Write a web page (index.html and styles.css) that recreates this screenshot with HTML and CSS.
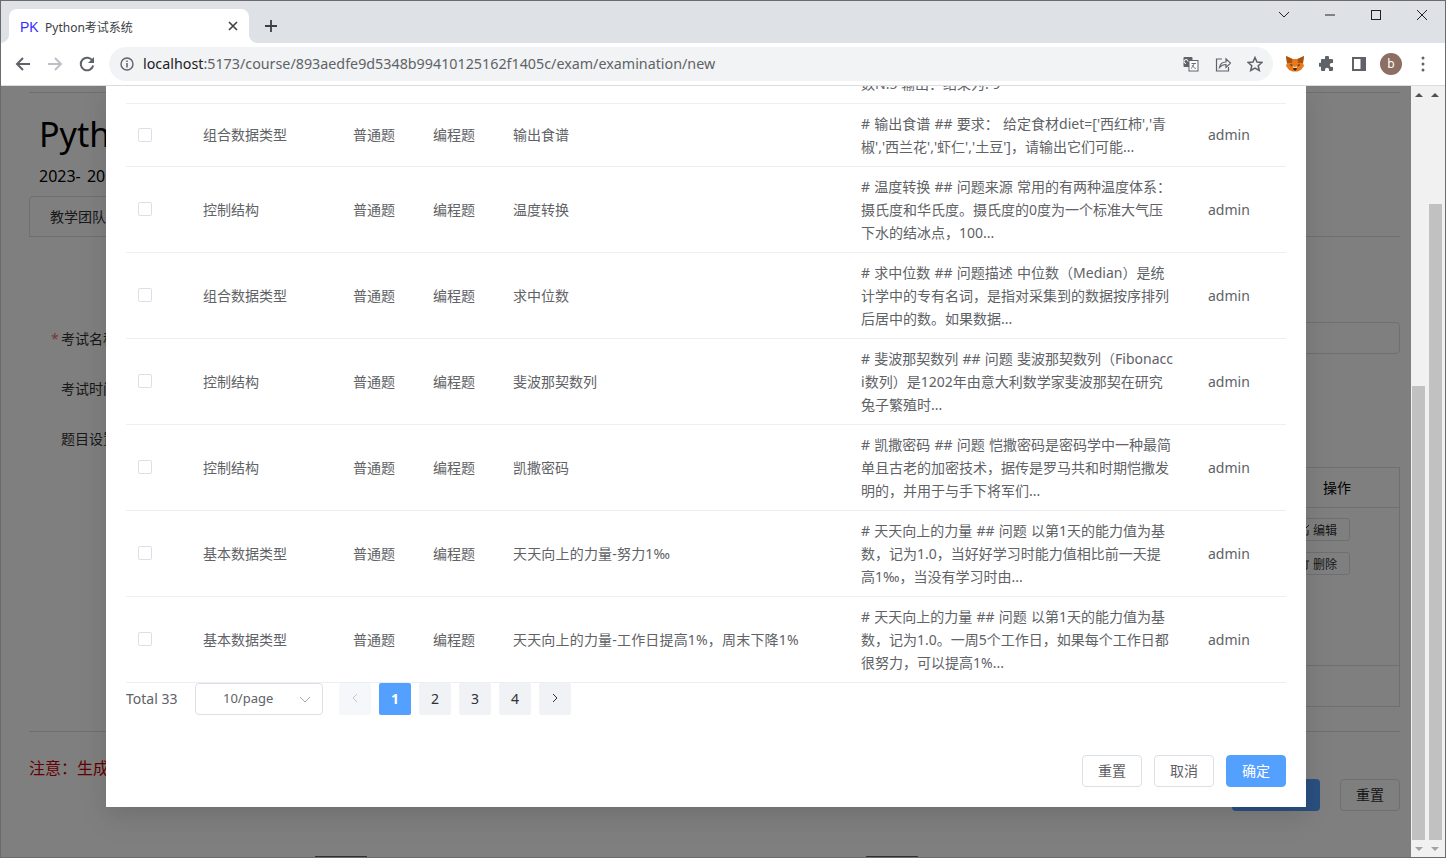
FILE: index.html
```html
<!DOCTYPE html>
<html lang="zh-CN">
<head>
<meta charset="utf-8">
<title>Python考试系统</title>
<link rel="stylesheet" href="styles.css">
</head>
<body>
<div class="window">
  <header class="tabstrip">
    <div class="tab">
      <span class="fav">PK</span>
      <span class="tab-title">Python考试系统</span>
      <svg class="ic-close" width="10" height="10" viewBox="0 0 10 10"><path d="M1 1l8 8M9 1l-8 8" stroke="#3c4043" stroke-width="1.6" fill="none"/></svg>
    </div>
    <svg class="newtab" width="14" height="14" viewBox="0 0 14 14"><path d="M7 1v12M1 7h12" stroke="#3c4043" stroke-width="1.8" fill="none"/></svg>
    <div class="winctl">
      <svg class="wc" width="16" height="16" viewBox="0 0 16 16"><path d="M3 5l5 5 5-5" stroke="#222" stroke-width="1" fill="none"/></svg>
      <svg class="wc" width="16" height="16" viewBox="0 0 16 16"><path d="M3 8h10" stroke="#222" stroke-width="1" fill="none"/></svg>
      <svg class="wc" width="16" height="16" viewBox="0 0 16 16"><rect x="3.500" y="3.500" width="9" height="9" stroke="#222" stroke-width="1" fill="none"/></svg>
      <svg class="wc" width="16" height="16" viewBox="0 0 16 16"><path d="M3 3l10 10M13 3L3 13" stroke="#222" stroke-width="1" fill="none"/></svg>
    </div>
  </header>
  <nav class="toolbar">
    <div class="navs">
      <svg width="18" height="18" viewBox="0 0 18 18"><path d="M16 9H3M9 3L3 9l6 6" stroke="#5f6368" stroke-width="2" fill="none"/></svg>
      <svg width="18" height="18" viewBox="0 0 18 18"><path d="M2 9h13M9 3l6 6-6 6" stroke="#bdc1c6" stroke-width="2" fill="none"/></svg>
      <svg width="18" height="18" viewBox="0 0 18 18"><path d="M14.600 6A6.300 6.300 0 1 0 15.200 10.500" stroke="#5f6368" stroke-width="2" fill="none"/><path d="M16 2v6h-6z" fill="#5f6368"/></svg>
    </div>
    <div class="omnibox">
      <svg class="info" width="14" height="14" viewBox="0 0 14 14"><circle cx="7" cy="7" r="6" stroke="#5f6368" stroke-width="1.400" fill="none"/><path d="M7 6v4.500M7 3.500v1.400" stroke="#5f6368" stroke-width="1.500" fill="none"/></svg>
      <span class="url"><span class="host">localhost</span>:5173/course/893aedfe9d5348b99410125162f1405c/exam/examination/new</span>
      <div class="omni-icons">
        <svg width="16" height="16" viewBox="0 0 16 16"><rect x="0.500" y="1" width="9" height="10" rx="1" fill="#5f6368"/><rect x="6" y="4.500" width="9" height="10.500" fill="#fff" stroke="#5f6368"/><path d="M3 7.500a2 2 0 1 1 2-2" stroke="#fff" fill="none"/><path d="M8.500 7.500h4.500M11 7.500c-.3 2.500-1.500 4-3 5M9 9c.6 1.500 2 3 4 3.500" stroke="#5f6368" stroke-width=".9" fill="none"/></svg>
        <svg width="16" height="16" viewBox="0 0 16 16"><path d="M7 3H1.500v12h12v-4" stroke="#5f6368" stroke-width="1.200" fill="none"/><path d="M4.500 11.500c.5-3.500 3-5.500 6.500-5.500V2.800l4.500 4.300-4.500 4.300V8.500c-2.500 0-4.800.8-6.500 3z" stroke="#5f6368" stroke-width="1.200" fill="none"/></svg>
        <svg width="16" height="16" viewBox="0 0 16 16"><path d="M8 1.500l2 4.500 4.900.5-3.700 3.200 1.100 4.800L8 12l-4.300 2.500 1.100-4.800L1.100 6.500 6 6z" stroke="#5f6368" stroke-width="1.500" fill="none"/></svg>
      </div>
    </div>
    <div class="exts">
      <svg width="18" height="16" viewBox="0 0 18 16"><path d="M0 0l6.500 3h5L18 0l-1 7 1 3-3 4-3.500 1.500h-5L3 14l-3-4 1-3z" fill="#e8791c"/><path d="M0 0l6.500 3L6 7 1 7zM18 0l-6.500 3 .5 4 5 0z" fill="#a8540f"/><path d="M7 12h4l-1 2.500H8z" fill="#3a2a1c"/><path d="M4 8l3 1-2 1.500zM14 8l-3 1 2 1.500z" fill="#5a3c1c"/><path d="M7 10l2 1 2-1v2H7z" fill="#f0c8a0"/></svg>
      <svg width="16" height="16" viewBox="0 0 16 16"><path d="M6 1.500a2 2 0 0 1 4 0V3h3a1 1 0 0 1 1 1v3h-1.300a2 2 0 0 0 0 4H14v3a1 1 0 0 1-1 1h-3v-1.300a2 2 0 0 0-4 0V15H3a1 1 0 0 1-1-1v-3.200H.8a2 2 0 0 1 0-4H2V4a1 1 0 0 1 1-1h3z" fill="#5f6368"/></svg>
      <svg class="ext-side" width="14" height="14" viewBox="0 0 14 14"><path d="M0 0h14v14H0z" fill="#5f6368"/><path d="M2 2h6.500v10H2z" fill="#fff"/></svg>
      <span class="avatar">b</span>
      <svg width="4" height="16" viewBox="0 0 4 16"><circle cx="2" cy="2" r="1.500" fill="#5f6368"/><circle cx="2" cy="8" r="1.500" fill="#5f6368"/><circle cx="2" cy="14" r="1.500" fill="#5f6368"/></svg>
    </div>
  </nav>
  <main class="content">
    <div class="viewport">
      <div class="page">
        <div class="top-rule"></div>
        <h1 class="course-title">Python</h1>
        <p class="course-term">2023- 2024</p>
        <div class="tabs"><span class="tabs-item">教学团队</span></div>
        <form class="form">
          <div class="form-row"><span class="form-label"><i class="star">*</i>考试名称</span><span class="form-input"></span></div>
          <div class="form-row"><span class="form-label">考试时间</span></div>
          <div class="form-row"><span class="form-label">题目设置</span></div>
        </form>
        <div class="bg-table">
          <div class="bg-head"><span class="bg-op">操作</span></div>
          <div class="bg-body">
            <span class="bg-btn"><svg class="bg-ic" width="12" height="12" viewBox="0 0 12 12"><path d="M1 2h6M1 2v9h9V6M5 7l6-6" stroke="#303133" fill="none"/></svg>编辑</span>
            <span class="bg-btn"><svg class="bg-ic" width="12" height="12" viewBox="0 0 12 12"><path d="M1 3h10M3 3v8h6V3M5 1h2" stroke="#303133" fill="none"/></svg>删除</span>
          </div>
          <div class="bg-foot"></div>
        </div>
        <div class="bottom-rule"></div>
        <div class="note-row">
          <span class="note">注意：生成</span>
          <div class="actions">
            <span class="bg-primary"></span>
            <span class="bg-reset">重置</span>
          </div>
        </div>
        <div class="peeks"><span class="peek"></span><span class="peek"></span></div>
      </div>
      <div class="mask"></div>
      <section class="modal">
        <table class="qtable">
          <colgroup><col class="c1"><col class="c2"><col class="c3"><col class="c4"><col class="c5"><col class="c6"><col class="c7"></colgroup>
          <tbody>
            <tr class="clip-row"><td colspan="5"></td><td colspan="2"><div class="clip-inner">数N:5 输出：结果为: 9</div></td></tr>
            <tr class="tight"><td><span class="cb"></span></td><td>组合数据类型</td><td>普通题</td><td>编程题</td><td>输出食谱</td><td># 输出食谱 ## 要求： 给定食材diet=['西红柿','青<br>椒','西兰花','虾仁','土豆']，请输出它们可能...</td><td>admin</td></tr>
            <tr><td><span class="cb"></span></td><td>控制结构</td><td>普通题</td><td>编程题</td><td>温度转换</td><td># 温度转换 ## 问题来源 常用的有两种温度体系：<br>摄氏度和华氏度。摄氏度的0度为一个标准大气压<br>下水的结冰点，100...</td><td>admin</td></tr>
            <tr><td><span class="cb"></span></td><td>组合数据类型</td><td>普通题</td><td>编程题</td><td>求中位数</td><td># 求中位数 ## 问题描述 中位数（Median）是统<br>计学中的专有名词，是指对采集到的数据按序排列<br>后居中的数。如果数据...</td><td>admin</td></tr>
            <tr><td><span class="cb"></span></td><td>控制结构</td><td>普通题</td><td>编程题</td><td>斐波那契数列</td><td># 斐波那契数列 ## 问题 斐波那契数列（Fibonacc<br>i数列）是1202年由意大利数学家斐波那契在研究<br>兔子繁殖时...</td><td>admin</td></tr>
            <tr><td><span class="cb"></span></td><td>控制结构</td><td>普通题</td><td>编程题</td><td>凯撒密码</td><td># 凯撒密码 ## 问题 恺撒密码是密码学中一种最简<br>单且古老的加密技术，据传是罗马共和时期恺撒发<br>明的，并用于与手下将军们...</td><td>admin</td></tr>
            <tr><td><span class="cb"></span></td><td>基本数据类型</td><td>普通题</td><td>编程题</td><td class="loose">天天向上的力量-努力1‰</td><td># 天天向上的力量 ## 问题 以第1天的能力值为基<br>数，记为1.0，当好好学习时能力值相比前一天提<br>高1‰，当没有学习时由...</td><td>admin</td></tr>
            <tr><td><span class="cb"></span></td><td>基本数据类型</td><td>普通题</td><td>编程题</td><td class="loose">天天向上的力量-工作日提高1%，周末下降1%</td><td># 天天向上的力量 ## 问题 以第1天的能力值为基<br>数，记为1.0。一周5个工作日，如果每个工作日都<br>很努力，可以提高1%...</td><td>admin</td></tr>
          </tbody>
        </table>
        <div class="pager">
          <span class="total">Total 33</span>
          <span class="select"><span class="sel-text">10/page</span><svg class="sel-arrow" width="12" height="12" viewBox="0 0 12 12"><path d="M1 4l5 5 5-5" stroke="#a8abb2" fill="none"/></svg></span>
          <span class="pg pg-disabled"><svg width="10" height="10" viewBox="0 0 10 10"><path d="M7 1L3 5l4 4" stroke="#c0c4cc" fill="none"/></svg></span>
          <span class="pg pg-active">1</span>
          <span class="pg">2</span>
          <span class="pg">3</span>
          <span class="pg">4</span>
          <span class="pg"><svg width="10" height="10" viewBox="0 0 10 10"><path d="M3 1l4 4-4 4" stroke="#303133" fill="none"/></svg></span>
        </div>
        <footer class="modal-foot">
          <span class="btn">重置</span>
          <span class="btn">取消</span>
          <span class="btn btn-primary">确定</span>
        </footer>
      </section>
    </div>
    <div class="sbar"><i class="sb-up"></i><div class="sb-track sb-track-a"><div class="sb-thumb"></div></div><i class="sb-down"></i></div>
    <div class="sbar"><i class="sb-up"></i><div class="sb-track sb-track-b"><div class="sb-thumb"></div></div><i class="sb-down"></i></div>
  </main>
</div>
</body>
</html>
```

FILE: styles.css
```css
* { box-sizing: border-box; }
html, body { margin: 0; height: 100%; overflow: hidden; }
body { font-family: "Noto Sans", "Noto Sans CJK SC", sans-serif; font-size: 14px; color: #606266; }

.window { width: 1446px; height: 858px; display: flex; flex-direction: column; border: 1px solid #6b6b6b; background: #fff; }

/* browser frame */
.tabstrip { flex: 0 0 42px; background: #dee1e6; display: flex; align-items: flex-end; padding-left: 8px; }
.tab { width: 240px; height: 34px; background: #fff; border-radius: 8px 8px 0 0; display: flex; align-items: center; padding: 0 11px; position: relative; }
.tab::before, .tab::after { content: ""; position: absolute; bottom: 0; width: 8px; height: 8px; }
.tab::before { left: -8px; background: radial-gradient(circle at 0 0, #dee1e6 7.500px, #fff 8px); }
.tab::after { right: -8px; background: radial-gradient(circle at 100% 0, #dee1e6 7.500px, #fff 8px); }
.fav { font-size: 14px; color: #3b2bff; width: 25px; font-family: "Liberation Sans", sans-serif; padding-top: 1px; }
.tab-title { flex: 1; font-size: 12px; color: #3c4043; padding-top: 2px; }
.newtab { align-self: flex-start; margin: 18px 0 0 15px; }
.winctl { margin-left: auto; align-self: flex-start; display: flex; gap: 30px; margin-top: 6px; padding-right: 15px; }
.toolbar { flex: 0 0 43px; background: #fff; border-bottom: 1px solid #dadce0; display: flex; align-items: center; padding: 0 13px 1px 13px; }
.navs { display: flex; gap: 14px; width: 95px; flex: none; }
.omnibox { flex: none; width: 1164px; height: 34px; border-radius: 17px; background: #f1f3f4; display: flex; align-items: center; padding: 0 10px 0 11px; }
.info { margin-right: 9px; }
.url { font-size: 14.300px; color: #5f6368; white-space: nowrap; padding-bottom: 1px; }
.host { color: #202124; }
.omni-icons { margin-left: auto; display: flex; gap: 16px; align-items: center; }
.exts { display: flex; align-items: center; margin-left: 13px; gap: 15px; flex: none; }
.ext-side { margin: 0 -1px 0 2px; }
.avatar { width: 22px; height: 22px; border-radius: 50%; background: #8d6e63; color: #fff; font-size: 12px; display: flex; align-items: center; justify-content: center; margin-right: 4px; }

/* main */
.content { flex: 1; min-height: 0; display: flex; }
.viewport { width: 1411px; position: relative; overflow: hidden; }
.sbar { width: 17px; background: #f1f1f1; display: flex; flex-direction: column; padding-left: 1px; }
.sb-up, .sb-down { flex: 0 0 17px; display: flex; align-items: center; justify-content: center; }
.sb-up::before { content: ""; border: 4px solid transparent; border-top: 0; border-bottom: 4px solid #505050; margin-right: 3px; }
.sb-down::before { content: ""; border: 4px solid transparent; border-bottom: 0; border-top: 4px solid #a3a3a3; margin-right: 3px; }
.sb-track { flex: 1; display: flex; flex-direction: column; padding-right: 3px; }
.sb-track-a { padding-top: 283px; }
.sb-track-b { padding-top: 101px; }
.sb-thumb { flex: 1; background: #c1c1c1; }

/* dimmed page */
.page { height: 100%; padding: 6px 11px 0 28px; color: #000; overflow: hidden; position: relative; }
.top-rule { border-top: 1px solid #dcdfe6; }
.course-title { margin: 18px 0 0; padding-left: 10px; font-size: 34px; font-weight: 400; line-height: 46px; }
.course-term { margin: 7px 0 0; padding-left: 10px; font-size: 16px; line-height: 24px; word-spacing: 2px; }
.tabs { margin-top: 8px; height: 41px; border-bottom: 1px solid #dcdfe6; }
.tabs-item { display: block; width: 160px; height: 41px; border: 1px solid #dcdfe6; border-radius: 4px 4px 0 0; padding-left: 20px; line-height: 40px; color: #303133; }
.form { margin-top: 85px; display: flex; flex-direction: column; gap: 18px; }
.form-row { display: flex; height: 32px; align-items: center; padding-left: 22px; }
.form-label { color: #303133; white-space: nowrap; width: 120px; padding-left: 10px; }
.star { color: #f56c6c; font-style: normal; display: inline-block; width: 10px; margin-left: -10px; }
.form-input { flex: 1; height: 32px; border: 1px solid #dcdfe6; border-radius: 4px; }
.bg-table { margin: 13px 0 0 120px; border: 1px solid #dcdfe6; height: 240px; display: flex; flex-direction: column; }
.bg-head { height: 40px; border-bottom: 1px solid #dcdfe6; display: flex; align-items: center; justify-content: flex-end; padding: 0 48px 2px 0; color: #000; }
.bg-body { flex: 1; border-bottom: 1px solid #dcdfe6; display: flex; flex-direction: column; align-items: flex-end; padding: 10px 49px 0 0; gap: 11px; }
.bg-btn { width: 70px; height: 23px; border: 1px solid #dcdfe6; border-radius: 3px; font-size: 12px; display: flex; align-items: center; justify-content: flex-end; gap: 3px; padding-right: 12px; color: #303133; }
.bg-foot { height: 40px; }
.bottom-rule { border-top: 1px solid #dcdfe6; margin-top: 24px; }
.note-row { display: flex; justify-content: space-between; align-items: flex-start; margin-top: 21px; }
.note { color: #c00; font-size: 16px; line-height: 30px; }
.actions { display: flex; gap: 20px; margin-top: 26px; }
.bg-primary { width: 88px; height: 32px; background: #54a0ff; border-radius: 4px; }
.bg-reset { width: 60px; height: 32px; border: 1px solid #dcdfe6; border-radius: 4px; text-align: center; line-height: 30px; color: #303133; }
.peeks { display: flex; gap: 499px; margin: 45px 0 0 286px; }
.peek { width: 52px; height: 2px; background: #606060; }
.mask { position: absolute; inset: 0; background: rgba(0, 0, 0, .5); }

/* modal */
.modal { position: absolute; left: 105px; top: 0; width: 1200px; height: 721px; background: #fff; padding: 0 20px 20px; box-shadow: 0 12px 32px 4px rgba(0,0,0,.04), 0 8px 20px rgba(0,0,0,.08); }
.qtable { width: 1160px; table-layout: fixed; border-collapse: separate; border-spacing: 0; line-height: 23px; }
.qtable td { padding: 8px 12px; border-bottom: 1px solid #ebeef5; white-space: nowrap; overflow: hidden; vertical-align: middle; }
.qtable td:nth-child(6) { word-spacing: .6px; }
.qtable .tight td:not(:nth-child(6)) { padding-bottom: 9px; }
.qtable .tight .cb { margin: 1px 0 0; }
.qtable .loose { letter-spacing: .18px; }
.c1 { width: 65px; } .c2 { width: 150px; } .c3 { width: 80px; } .c4 { width: 80px; } .c5 { width: 348px; } .c6 { width: 347px; } .c7 { width: 90px; }
.qtable .clip-row td { padding: 0 12px; height: 18px; vertical-align: top; word-spacing: 0; }
.clip-inner { line-height: 23px; margin-top: -14px; }
.cb { display: block; width: 14px; height: 14px; border: 1px solid #dcdfe6; border-radius: 2px; background: #fff; margin-bottom: 2px; }
.pager { display: flex; align-items: center; height: 32px; }
.total { width: 69px; color: #606266; padding-bottom: 2px; }
.select { width: 128px; height: 32px; border: 1px solid #dcdfe6; border-radius: 4px; display: flex; align-items: center; padding-left: 27px; margin-right: 16px; }
.sel-text { padding-bottom: 2px; font-size: 13px; }
.sel-arrow { margin-left: auto; margin-right: 11px; }
.pg { width: 32px; height: 32px; margin-right: 8px; background: #f0f2f5; border-radius: 2px; display: flex; align-items: center; justify-content: center; color: #303133; padding-bottom: 2px; }
.pg-disabled { background: #f5f7fa; }
.pg-active { background: #53a0ff; color: #fff; font-weight: 700; }
.modal-foot { margin-top: 40px; display: flex; justify-content: flex-end; gap: 12px; }
.btn { width: 60px; height: 32px; border: 1px solid #dcdfe6; border-radius: 4px; display: flex; align-items: center; justify-content: center; color: #606266; padding-bottom: 2px; }
.btn-primary { background: #53a0ff; border-color: #53a0ff; color: #fff; }
```
